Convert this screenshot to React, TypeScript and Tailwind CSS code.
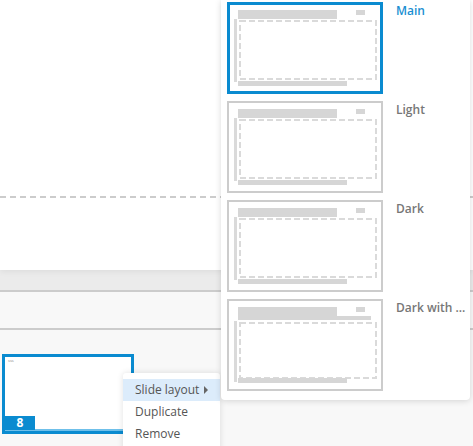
import React from 'react';

type Layout = { name: string; active?: boolean; wide?: boolean };

const layouts: Layout[] = [
  { name: 'Main', active: true },
  { name: 'Light' },
  { name: 'Dark' },
  { name: 'Dark with ...', wide: true },
];

// Small drawing of a slide layout used inside each picker tile
const LayoutPreview: React.FC<{ wide?: boolean }> = ({ wide }) => {
  const top = wide ? 23 : 18;
  return (
    <svg width="156" height="92" viewBox="0 0 156 92" className="block">
      <rect x="11" y="8" width="99" height={wide ? 13 : 9} fill="#d6d6d6" />
      {wide && <rect x="110" y="17" width="34" height="4" fill="#d6d6d6" />}
      <rect x="129" y="8" width="9" height="5" fill="#d6d6d6" />
      <rect x="7" y={top - 1} width="3" height={wide ? 61 : 63} fill="#dadada" />
      <rect
        x="13"
        y={top + 1}
        width="136"
        height={wide ? 55 : 58}
        fill="none"
        stroke="#dadada"
        strokeWidth="2"
        strokeDasharray="6 3"
      />
      <rect x="11" y="79" width="109" height="5" fill="#d6d6d6" />
    </svg>
  );
};

const App: React.FC = () => {
  return (
    <div className="relative w-[473px] h-[446px] overflow-hidden bg-[#f8f8f8] font-['Open_Sans',sans-serif]">
      {/* Editor canvas */}
      <div className="h-[270px] bg-white pt-[196px] shadow-[0_2px_6px_rgba(0,0,0,0.06)] relative z-[1]">
        <div className="h-[2px] bg-[linear-gradient(to_right,#cccccc_6px,transparent_6px)] bg-[length:10px_2px]"></div>
      </div>

      {/* Toolbar strips */}
      <div className="h-[22px] bg-[#ebebeb] border-b-2 border-[#cccccc]"></div>
      <div className="h-[38px] bg-[#f8f8f8] border-b-2 border-[#cccccc]"></div>

      {/* Slide strip */}
      <div className="pl-[2px] pt-[24px]">
        <div className="relative w-[132px] h-[80px] border-[3px] border-[#0a8bd0] bg-white flex flex-col justify-between">
          <span className="pl-[3px] pt-[2px] text-[4px] leading-none text-[#888]">sss</span>
          <div className="flex items-end border-b-2 border-[#6fc0ea]">
            <div className="w-[30px] h-[14px] -mb-[1px] bg-[#0a8bd0] flex items-center justify-center text-white text-[12px] font-bold leading-none">
              8
            </div>
          </div>
        </div>
      </div>

      {/* Context menu */}
      <div className="absolute z-10 left-[123px] top-[373px] w-[97px] h-[80px] bg-white rounded-t-[3px] shadow-[0_0_6px_rgba(0,0,0,0.12)] pt-[6px] text-[12px] text-[#555]">
        <div className="h-[22px] bg-[#dcecfb] flex items-center px-[12px]">
          <span className="flex-1">Slide layout</span>
          <span className="w-0 h-0 border-y-[4px] border-y-transparent border-l-[4px] border-l-[#666]"></span>
        </div>
        <div className="h-[22px] flex items-center pl-[12px]">Duplicate</div>
        <div className="h-[22px] flex items-center pl-[12px]">Remove</div>
      </div>

      {/* Layout picker panel */}
      <div className="absolute z-10 left-[221px] top-0 w-[249px] bg-white rounded-b-[4px] shadow-[0_1px_6px_rgba(0,0,0,0.15)] pl-[6px] pt-[2px] pb-[9px] flex flex-col gap-[7px]">
        {layouts.map((l) => (
          <div key={l.name} className="flex items-start">
            <div
              className={
                l.active
                  ? 'w-[156px] h-[92px] border-[3px] border-[#0a8bd0] bg-white overflow-hidden'
                  : 'w-[156px] h-[92px] border-2 border-[#cccccc] bg-white overflow-hidden'
              }
            >
              <div className={l.active ? '-ml-[3px] -mt-[3px]' : '-ml-[2px] -mt-[2px]'}>
                <LayoutPreview wide={l.wide} />
              </div>
            </div>
            <div
              className={
                l.active
                  ? 'ml-[13px] mt-[1px] text-[12px] leading-[16px] font-semibold text-[#1a8fd2]'
                  : 'ml-[13px] mt-[1px] text-[12px] leading-[16px] font-semibold text-[#777]'
              }
            >
              {l.name}
            </div>
          </div>
        ))}
      </div>
    </div>
  );
};

export default App;
